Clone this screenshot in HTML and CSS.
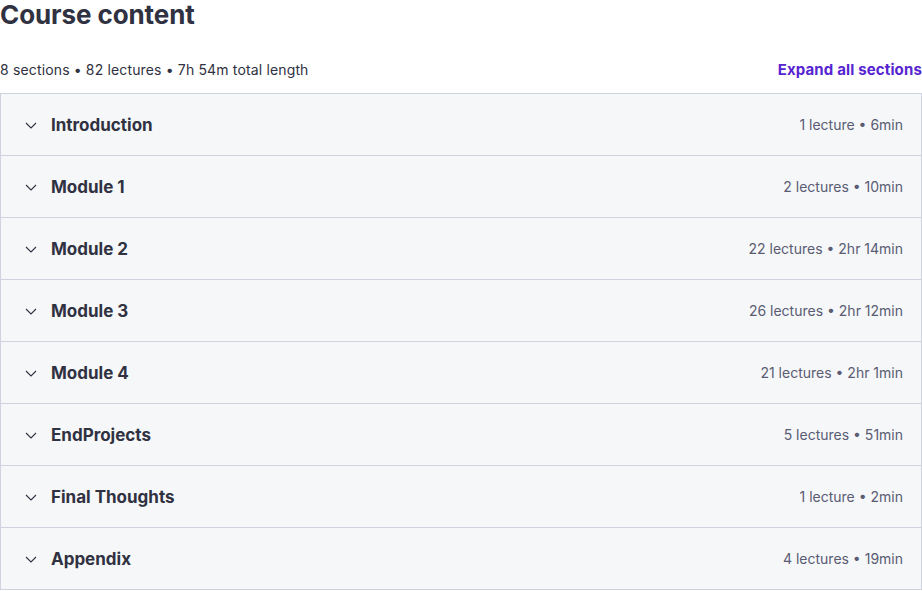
FILE: index.html
```html
<!DOCTYPE html>
<html>
  <head>
    <title>Course content</title>
    <link rel="stylesheet" href="styles.css">
  </head>

  <body>
    <div class="curriculum">
      <h2>Course content</h2>

      <div class="resumen">
        <span>8 sections • 82 lectures • 7h 54m total length</span>
        <button class="expandir">Expand all sections</button>
      </div>

      <div class="secciones">
        <div class="seccion">
          <span class="chevron"><svg width="16" height="16" viewBox="0 0 16 16"><path d="M3 6l5 5 5-5" fill="none" stroke="#303141" stroke-width="1.1"/></svg></span>
          <span class="titulo">Introduction</span>
          <span class="info">1 lecture • 6min</span>
        </div>
        <div class="seccion">
          <span class="chevron"><svg width="16" height="16" viewBox="0 0 16 16"><path d="M3 6l5 5 5-5" fill="none" stroke="#303141" stroke-width="1.1"/></svg></span>
          <span class="titulo">Module 1</span>
          <span class="info">2 lectures • 10min</span>
        </div>
        <div class="seccion">
          <span class="chevron"><svg width="16" height="16" viewBox="0 0 16 16"><path d="M3 6l5 5 5-5" fill="none" stroke="#303141" stroke-width="1.1"/></svg></span>
          <span class="titulo">Module 2</span>
          <span class="info">22 lectures • 2hr 14min</span>
        </div>
        <div class="seccion">
          <span class="chevron"><svg width="16" height="16" viewBox="0 0 16 16"><path d="M3 6l5 5 5-5" fill="none" stroke="#303141" stroke-width="1.1"/></svg></span>
          <span class="titulo">Module 3</span>
          <span class="info">26 lectures • 2hr 12min</span>
        </div>
        <div class="seccion">
          <span class="chevron"><svg width="16" height="16" viewBox="0 0 16 16"><path d="M3 6l5 5 5-5" fill="none" stroke="#303141" stroke-width="1.1"/></svg></span>
          <span class="titulo">Module 4</span>
          <span class="info">21 lectures • 2hr 1min</span>
        </div>
        <div class="seccion">
          <span class="chevron"><svg width="16" height="16" viewBox="0 0 16 16"><path d="M3 6l5 5 5-5" fill="none" stroke="#303141" stroke-width="1.1"/></svg></span>
          <span class="titulo">EndProjects</span>
          <span class="info">5 lectures • 51min</span>
        </div>
        <div class="seccion">
          <span class="chevron"><svg width="16" height="16" viewBox="0 0 16 16"><path d="M3 6l5 5 5-5" fill="none" stroke="#303141" stroke-width="1.1"/></svg></span>
          <span class="titulo">Final Thoughts</span>
          <span class="info">1 lecture • 2min</span>
        </div>
        <div class="seccion">
          <span class="chevron"><svg width="16" height="16" viewBox="0 0 16 16"><path d="M3 6l5 5 5-5" fill="none" stroke="#303141" stroke-width="1.1"/></svg></span>
          <span class="titulo">Appendix</span>
          <span class="info">4 lectures • 19min</span>
        </div>
      </div>
    </div>
  </body>
</html>
```

FILE: styles.css
```css
body {
  font-family: Inter, "Noto Sans", sans-serif;
  margin: 0;
  color: #303141;
}
.curriculum {
  width: 922px;
}
h2 {
  font-size: 26px;
  font-weight: 700;
  line-height: 30px;
  margin: 0;
  letter-spacing: -0.1px;
}
.resumen {
  display: flex;
  justify-content: space-between;
  align-items: center;
  font-size: 14px;
  letter-spacing: 0.15px;
  margin-top: 28px;
  height: 22px;
  margin-bottom: 13px;
}
.expandir {
  background: none;
  border: none;
  padding: 0;
  font-family: inherit;
  font-size: 15px;
  font-weight: 700;
  letter-spacing: 0.15px;
  color: #5624d0;
  cursor: pointer;
}
.secciones {
  border: 1px solid #d1d2e0;
  border-bottom: none;
}
.seccion {
  display: flex;
  align-items: center;
  height: 61px;
  padding: 0 18px 0 22px;
  background-color: #f6f7f9;
  border-bottom: 1px solid #d1d2e0;
}
.chevron {
  display: flex;
  width: 16px;
  margin-right: 12px;
}
.titulo {
  font-size: 17px;
  font-weight: 700;
  flex: 1;
}
.info {
  font-size: 14px;
  color: #595c73;
}
```
